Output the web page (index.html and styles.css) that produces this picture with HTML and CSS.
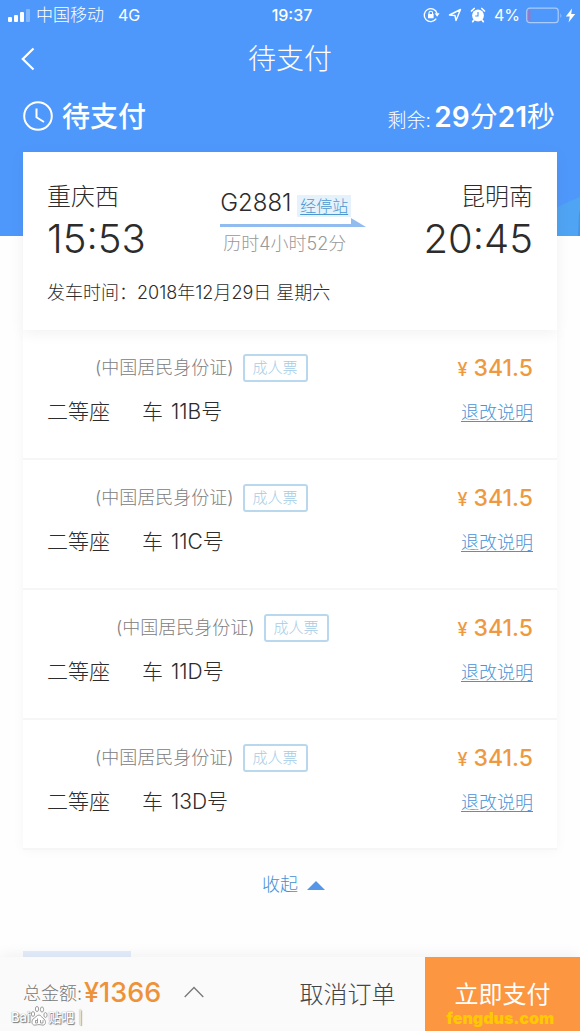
FILE: index.html
```
<!DOCTYPE html>
<html lang="zh-CN">
<head>
<meta charset="utf-8">
<meta name="viewport" content="width=device-width, initial-scale=1">
<title>待支付</title>
<link rel="stylesheet" href="styles.css">
</head>
<body>
<header class="hero">
  <svg class="hero-art" viewBox="0 0 48 56" aria-hidden="true"><path d="M0 38 48 17V56H0z" fill="#4fa4f3"/><path d="M46 56 47 34 48 30V56z" fill="#4592ee"/></svg>
  <div class="status">
    <div class="status-left">
      <svg width="23" height="14" viewBox="0 0 23 14" fill="#fff" aria-hidden="true"><rect x="0" y="9" width="4" height="5" rx="1"/><rect x="6" y="7" width="4" height="7" rx="1"/><rect x="12" y="4" width="4" height="10" rx="1"/><rect x="18" y="1" width="4" height="13" rx="1" opacity=".3"/></svg>
      <span>中国移动</span><span class="network">4G</span>
    </div>
    <time class="clock">19:37</time>
    <div class="status-right">
      <svg width="17" height="16" viewBox="0 0 17 16" fill="none" stroke="#fff" stroke-width="1.4" aria-hidden="true"><path d="M13.2 11.7A6.5 6.5 0 1 1 14 6.4"/><path d="M11.6 6.3h5l-2.5 3.4z" fill="#fff" stroke="none"/><rect x="5" y="7" width="5.600" height="4.200" rx=".5" fill="#fff" stroke="none"/><path d="M6 7.400V6a1.800 1.800 0 0 1 3.600 0v1.400" stroke-width="1.100"/></svg>
      <svg width="14" height="14" viewBox="0 0 14 14" fill="none" stroke="#fff" stroke-width="1.400" stroke-linejoin="round" aria-hidden="true"><path d="M1.500 7 12.500 1.500 8 12.500 7 7.500z"/></svg>
      <svg width="16" height="16" viewBox="0 0 16 16" aria-hidden="true"><circle cx="8" cy="8.500" r="5.900" fill="#fff"/><path d="M1.500 4 4.200 1.500M14.500 4l-2.700-2.500M4 13l-1.300 1.600M12 13l1.300 1.600" stroke="#fff" stroke-width="1.700" stroke-linecap="round"/><path d="M8 5v4H5.200" fill="none" stroke="#4f98fb" stroke-width="1.200"/></svg>
      <span>4%</span>
      <svg width="50" height="17" viewBox="0 0 50 17" aria-hidden="true"><rect x=".7" y="1.200" width="31.500" height="14.500" rx="3" fill="none" stroke="#a9cbfd" stroke-width="1.200"/><rect x="2.500" y="3.500" width="1.800" height="10" fill="#d0619a"/><path d="M34.500 6v5q1.600-2.500 0-5z" fill="#a9cbfd"/><path d="M46 1.500 39.800 9.500h4L42.500 15.500 49.200 7h-4z" fill="#fff"/></svg>
    </div>
  </div>
  <div class="navbar">
    <button class="back" type="button" aria-label="返回"><svg width="14" height="24" viewBox="0 0 14 24" fill="none" stroke="#fff" stroke-width="2.200" aria-hidden="true"><path d="M12.500 1.500 1.800 12l10.700 10.500"/></svg></button>
    <h1>待支付</h1>
  </div>
  <div class="state">
    <svg width="30" height="30" viewBox="0 0 30 30" fill="none" stroke="#fff" stroke-width="2" aria-hidden="true"><circle cx="15" cy="15" r="13.800"/><path d="M13.500 7.500v8.800l7.500 4.700"/></svg>
    <h2>待支付</h2>
    <p class="remain">剩余: <strong>29<b>分</b>21<b>秒</b></strong></p>
  </div>
</header>

<main class="order">
  <section class="trip">
    <div class="trip-route">
      <div class="stop"><span class="station">重庆西</span><time class="hour">15:53</time></div>
      <div class="train">
        <div class="train-name"><span>G2881</span><a class="via" href="#">经停站</a></div>
        <svg class="arrow" viewBox="0 0 146 9" aria-hidden="true"><path d="M0 6h131V0l15 9H0z" fill="#90bcf0"/></svg>
        <span class="duration">历时4小时52分</span>
      </div>
      <div class="stop stop-end"><span class="station">昆明南</span><time class="hour">20:45</time></div>
    </div>
    <p class="depart">发车时间：2018年12月29日 星期六</p>
  </section>
  <ul class="tickets">
    <li class="ticket">
      <div class="line"><span class="person"></span><span class="idtype">(中国居民身份证)</span><span class="tag">成人票</span><span class="price"><small>¥</small> 341.5</span></div>
      <div class="line"><span class="seat">二等座</span><span class="seat-no"><span>车</span><span>11B号</span></span><a class="rules" href="#">退改说明</a></div>
    </li>
    <li class="ticket">
      <div class="line"><span class="person"></span><span class="idtype">(中国居民身份证)</span><span class="tag">成人票</span><span class="price"><small>¥</small> 341.5</span></div>
      <div class="line"><span class="seat">二等座</span><span class="seat-no"><span>车</span><span>11C号</span></span><a class="rules" href="#">退改说明</a></div>
    </li>
    <li class="ticket">
      <div class="line"><span class="person person-long"></span><span class="idtype">(中国居民身份证)</span><span class="tag">成人票</span><span class="price"><small>¥</small> 341.5</span></div>
      <div class="line"><span class="seat">二等座</span><span class="seat-no"><span>车</span><span>11D号</span></span><a class="rules" href="#">退改说明</a></div>
    </li>
    <li class="ticket">
      <div class="line"><span class="person"></span><span class="idtype">(中国居民身份证)</span><span class="tag">成人票</span><span class="price"><small>¥</small> 341.5</span></div>
      <div class="line"><span class="seat">二等座</span><span class="seat-no"><span>车</span><span>13D号</span></span><a class="rules" href="#">退改说明</a></div>
    </li>
  </ul>
  <button class="collapse" type="button">收起<svg width="18" height="9" viewBox="0 0 18 9" aria-hidden="true"><path d="M9 0l9 9H0z" fill="#5596e6"/></svg></button>
  <div class="next-section"></div>
</main>

<footer class="paybar">
  <button class="total" type="button">总金额:<strong>¥1366</strong><svg width="20" height="12" viewBox="0 0 20 12" fill="none" stroke="#777" stroke-width="1.300" aria-hidden="true"><path d="M.7 11 10 1.500 19.300 11"/></svg></button>
  <button class="cancel" type="button">取消订单</button>
  <button class="pay" type="button">立即支付</button>
  <div class="mark mark-left"><span>Bai</span><svg width="18" height="22" viewBox="0 0 18 22" fill="#fff" stroke="#888" stroke-width=".8" aria-hidden="true"><ellipse cx="3" cy="9" rx="1.600" ry="2.400"/><ellipse cx="7" cy="4" rx="1.600" ry="2.600"/><ellipse cx="12" cy="4.500" rx="1.600" ry="2.600"/><ellipse cx="15.500" cy="10" rx="1.600" ry="2.400"/><path d="M9 10c2 0 3 3 5 4 3 3 1 7-2 6-2-.5-4-.5-6 0-4 1-5-3-3-6 2-1 4-4 6-4z"/><path d="M7.500 13.500v4.500h-2v-2.500h2M10.500 15v3h2.500v-3"/></svg><span>贴吧</span><span class="mark-bar">|</span></div>
  <div class="mark mark-right">fengdus.com</div>
</footer>
</body>
</html>
```
FILE: styles.css
```
* { box-sizing: border-box; }
body {
  margin: 0;
  min-height: 100vh;
  display: flex;
  flex-direction: column;
  background: #fefefe;
  color: #2c2c2c;
  font-family: Inter, "Noto Sans CJK SC", sans-serif;
  font-weight: 300;
}
h1, h2, p, ul { margin: 0; padding: 0; }
ul { list-style: none; }
button { padding: 0; border: 0; background: none; color: inherit; font: inherit; cursor: pointer; }
svg { display: block; flex: none; }

.hero {
  position: relative;
  padding-bottom: 84px;
  background: #4f98fb;
  color: #fff;
}
.hero-art { position: absolute; right: 0; bottom: 0; width: 48px; height: 56px; }
.status {
  display: grid;
  grid-template-columns: 1fr auto 1fr;
  align-items: center;
  height: 30px;
  padding: 0 4px 0 8px;
  font-size: 16px;
  font-weight: 400;
}
.status-left, .status-right { display: flex; align-items: center; }
.status-left { gap: 5px; font-size: 17px; font-weight: 300; line-height: 20px; }
.network { margin-left: 9px; font-size: 16px; font-weight: 400; }
.clock { font-weight: 500; }
.status-right { justify-content: flex-end; gap: 8px; }
.status-right span { margin-right: -2px; }
.navbar {
  display: grid;
  grid-template-columns: 48px 1fr 48px;
  align-items: center;
  height: 58px;
}
.back { display: flex; padding-left: 21px; }
.navbar h1 { font-size: 28px; font-weight: 300; line-height: 40px; text-align: center; }
.state { display: flex; align-items: center; gap: 9px; height: 64px; padding: 0 25px 8px 23px; }
.state h2 { padding-top: 2px; font-size: 28px; font-weight: 500; line-height: 40px; }
.remain { margin-left: auto; padding-top: 5px; font-size: 19px; line-height: 40px; }
.remain strong { margin-left: -2px; font-size: 28px; font-weight: 600; }
.remain b { font-size: 28px; font-weight: 400; }

.order {
  position: relative;
  flex: 1;
  display: flex;
  flex-direction: column;
  margin-top: -84px;
  padding: 0 23px;
}
.trip {
  position: relative;
  padding: 26px 24px 22px;
  background: #fff;
  box-shadow: 0 3px 14px rgba(0, 0, 0, .06);
}
.trip-route { display: flex; justify-content: space-between; }
.stop { display: flex; flex-direction: column; }
.stop-end { align-items: flex-end; }
.station { font-size: 24px; line-height: 38px; }
.hour { font-size: 40px; line-height: 46px; }
.train { width: 146px; margin-left: 17px; padding-top: 9px; }
.train-name { display: flex; align-items: center; justify-content: space-between; gap: 4px; height: 31px; padding-right: 15px; font-size: 24px; }
.via { margin-top: 6px; padding: 0 3px; background: #e5f1fb; color: #4c96d0; font-size: 16px; line-height: 22px; white-space: nowrap; text-underline-offset: 2px; }
.arrow { width: 100%; height: 9px; }
.duration { display: block; padding-left: 3px; color: #999; font-size: 18px; line-height: 34px; white-space: nowrap; }
.depart { margin-top: 16px; font-size: 18px; line-height: 30px; }

.tickets { background: #fff; box-shadow: 0 0 12px rgba(0, 0, 0, .04); }
.ticket {
  display: flex;
  flex-direction: column;
  gap: 8px;
  height: 130px;
  padding: 20px 24px 0;
  border-bottom: 2px solid #f6f6f6;
}
.line { display: flex; align-items: center; height: 36px; }
.person { width: 48px; }
.person-long { width: 69px; }
.idtype { color: #808080; font-size: 18px; line-height: 24px; }
.tag { margin-left: 9px; padding: 0 8px; border: 2px solid #b9d8ed; border-radius: 3px; color: #a5cce6; font-size: 15px; line-height: 24px; }
.price { margin-left: auto; color: #ee993f; font-size: 23px; font-weight: 500; }
.price small { font-size: 18px; }
.seat { width: 95px; font-size: 21px; line-height: 30px; }
.seat-no { display: flex; gap: 8px; font-size: 21px; line-height: 30px; }
.rules { margin-left: auto; padding-bottom: 2px; color: #4c93d6; font-size: 18px; text-underline-offset: 2px; }
.collapse { display: flex; align-items: center; align-self: center; gap: 9px; margin-top: 19px; padding-left: 7px; color: #4590d4; font-size: 18px; line-height: 32px; }
.next-section { width: 108px; height: 6px; margin-top: auto; background: #e4edfc; }

.paybar {
  position: sticky;
  bottom: 0;
  display: flex;
  align-items: stretch;
  min-height: 74px;
  background: #fafafa;
  box-shadow: 0 -2px 14px rgba(0, 0, 0, .06);
}
.paybar button { padding-bottom: 4px; }
.total { display: flex; flex: 1; align-items: center; padding-left: 23px; color: #777; font-size: 18px; white-space: nowrap; }
.total strong { margin: 0 23px 0 2px; color: #ee923a; font-size: 27px; font-weight: 500; }
.cancel { width: 155px; color: #444; font-size: 24px; }
.pay { width: 155px; background: #fc9640; color: #fff; font-size: 24px; font-weight: 400; }
.mark { position: absolute; pointer-events: none; }
.mark-left {
  left: 11px;
  bottom: 4px;
  display: flex;
  align-items: flex-end;
  color: #fff;
  font-size: 13px;
  font-weight: 500;
  line-height: 20px;
  text-shadow: 1px 1px 1px #777, 0 0 1px #777;
}
.mark-bar { margin-left: 4px; font-weight: 300; }
.mark-right { right: 26px; bottom: 2px; color: #ffc800; font-size: 16px; font-weight: 900; line-height: 22px; }
```
